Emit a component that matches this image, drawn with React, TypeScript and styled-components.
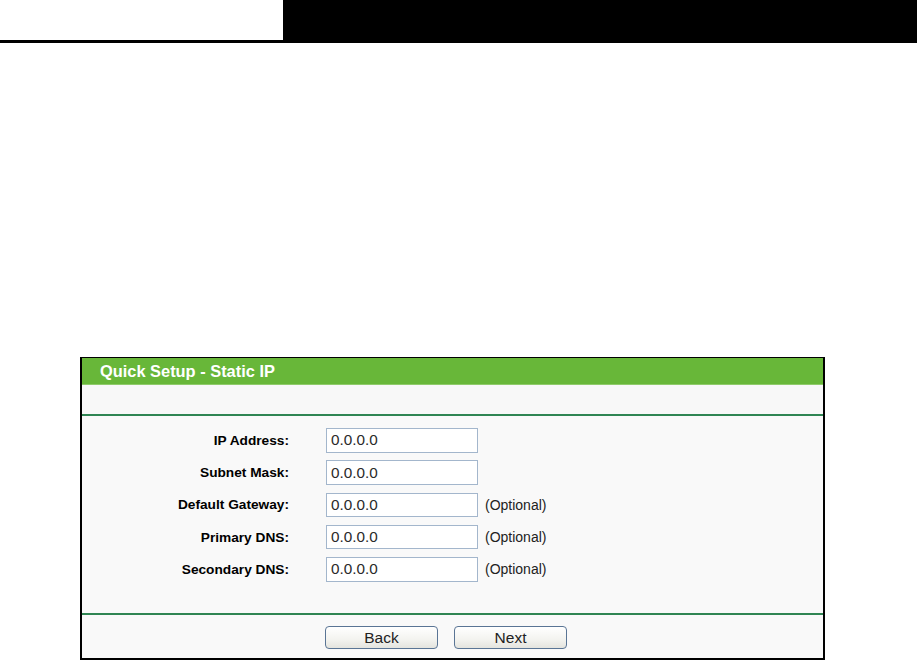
import styled, { createGlobalStyle } from "styled-components";

const GlobalStyle = createGlobalStyle`
  html, body {
    margin: 0;
    padding: 0;
    background: #ffffff;
  }
  body {
    font-family: "Liberation Sans", Arial, sans-serif;
  }
`;

interface Field {
  label: string;
  value: string;
  optional?: boolean;
}

const FIELDS: Field[] = [
  { label: "IP Address:", value: "0.0.0.0" },
  { label: "Subnet Mask:", value: "0.0.0.0" },
  { label: "Default Gateway:", value: "0.0.0.0", optional: true },
  { label: "Primary DNS:", value: "0.0.0.0", optional: true },
  { label: "Secondary DNS:", value: "0.0.0.0", optional: true },
];

function App() {
  return (
    <>
      <GlobalStyle />
      <Page>
        <TopBar>
          <TopBlank />
          <TopBlack />
        </TopBar>
        <Panel>
          <Title>Quick Setup - Static IP</Title>
          <SubRow />
          <Form>
            {FIELDS.map((f) => (
              <FieldRow key={f.label}>
                <Label>{f.label}</Label>
                <Input defaultValue={f.value} />
                {f.optional && <Hint>(Optional)</Hint>}
              </FieldRow>
            ))}
          </Form>
          <Actions>
            <Button type="button">Back</Button>
            <Button type="button">Next</Button>
          </Actions>
        </Panel>
      </Page>
    </>
  );
}

const Page = styled.div`
  width: 917px;
  height: 660px;
  overflow: hidden;
  display: flex;
  flex-direction: column;
`;

const TopBar = styled.div`
  display: flex;
  height: 40px;
  border-bottom: 3px solid #000;
`;

const TopBlank = styled.div`
  width: 283px;
  background: #fff;
`;

const TopBlack = styled.div`
  flex: 1;
  background: #000;
`;

const Panel = styled.div`
  margin: 314px 0 0 80px;
  width: 745px;
  height: 303px;
  box-sizing: border-box;
  border: 2px solid #000;
  border-top-width: 1px;
  background: #f9f9f9;
  display: flex;
  flex-direction: column;
`;

const Title = styled.div`
  height: 26px;
  line-height: 26px;
  background: #68b739;
  color: #fff;
  font-weight: bold;
  font-size: 16.4px;
  padding-left: 18px;
  border-bottom: 1px solid #8fcb6a;
`;

const SubRow = styled.div`
  height: 29px;
  background: #f8f8f8;
  border-bottom: 2px solid #2f8553;
`;

const Form = styled.div`
  display: flex;
  flex-direction: column;
  gap: 7.75px;
  padding: 12px 0 31px;
  border-bottom: 2px solid #2f8553;
`;

const FieldRow = styled.div`
  display: flex;
  align-items: center;
  height: 24.5px;
`;

const Label = styled.span`
  width: 207px;
  text-align: right;
  font-weight: bold;
  font-size: 13.7px;
  color: #000;
  margin-right: 37px;
`;

const Input = styled.input`
  width: 152px;
  height: 24.5px;
  box-sizing: border-box;
  border: 1px solid #a3b6cc;
  background: #fff;
  padding: 0 0 0 4px;
  font-family: "Liberation Sans", Arial, sans-serif;
  font-size: 15.3px;
  color: #2a2a2a;
  outline: none;
`;

const Hint = styled.span`
  margin-left: 7px;
  font-size: 14px;
  color: #222;
`;

const Actions = styled.div`
  display: flex;
  gap: 16px;
  padding: 11px 0 0 243px;
`;

const Button = styled.button`
  width: 113px;
  height: 23px;
  box-sizing: border-box;
  border: 1px solid #5a7595;
  border-radius: 4px;
  background: linear-gradient(#ffffff, #f3f3ef 60%, #e4e4de);
  font-family: "Liberation Sans", Arial, sans-serif;
  font-size: 15.5px;
  color: #222;
  padding: 0;
  line-height: 21px;
`;

export default App;
